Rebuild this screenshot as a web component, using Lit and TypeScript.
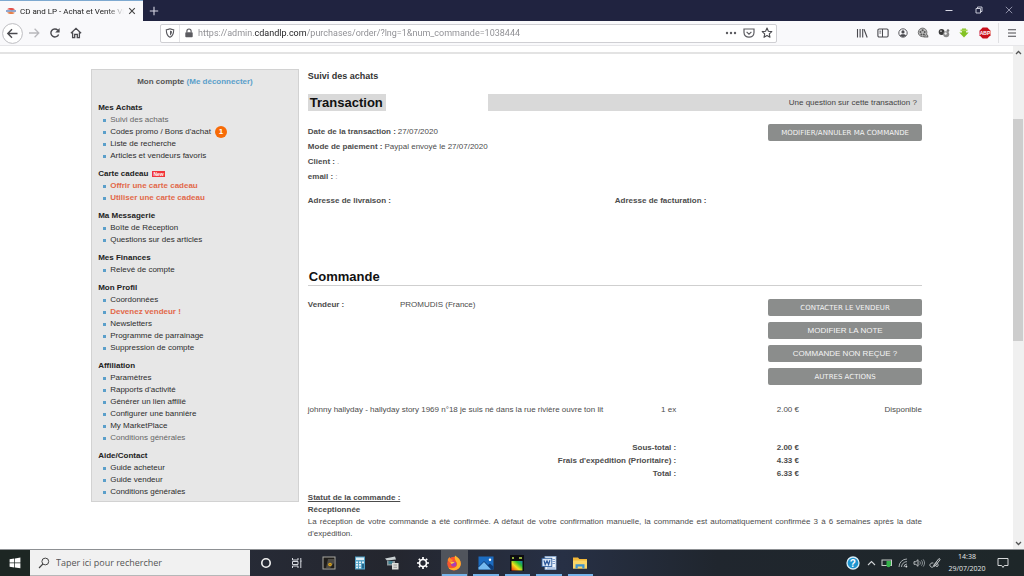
import { LitElement, html, css, svg, nothing } from "lit";
import { customElement } from "lit/decorators.js";
import { classMap } from "lit/directives/class-map.js";

const icon = (w: number, h: number, body: unknown) => html`
  <svg width=${w} height=${h} viewBox="0 0 ${w} ${h}" aria-hidden="true">${body}</svg>
`;

const ICONS = {
  favicon: icon(10, 8, svg`
    <path d="M1 2.2C3 .4 7 .6 9 2.4L6 3.2z" fill="#e2504a"/>
    <path d="M0 4h10" stroke="#4c6fae" stroke-width="1.2"/>
    <path d="M1 5.4l4-.6 4 1C7 7.6 3 7.4 1 5.4z" fill="#e8804a"/>`),
  close: icon(8, 8, svg`<path d="M1.2 1.2l5.6 5.6M6.8 1.2L1.2 6.8" stroke="#444" stroke-width="1.1"/>`),
  plus: icon(10, 10, svg`<path d="M5 .8v8.4M.8 5h8.4" stroke="#d7d8e4" stroke-width="1.1"/>`),
  min: icon(8, 8, svg`<path d="M.5 4.5h7" stroke="#d7d8e4" stroke-width="1"/>`),
  restore: icon(8, 8, svg`<path d="M1 2.5h4.5V7H1zM2.5 2.5V1H7v4.5H5.5" fill="none" stroke="#d7d8e4" stroke-width=".9"/>`),
  winClose: icon(8, 8, svg`<path d="M.8.8l6.4 6.4M7.2.8L.8 7.2" stroke="#a9abc0" stroke-width=".8"/>`),
  back: icon(21, 21, svg`
    <circle cx="10.5" cy="10.5" r="9.9" fill="#fff" stroke="#bcbcc0" stroke-width="1"/>
    <path d="M15.5 10.5H6M10 6.2L5.8 10.5l4.2 4.3" fill="none" stroke="#4a4a4f" stroke-width="1.4"/>`),
  forward: icon(12, 12, svg`<path d="M1 6h9.3M6.6 1.8L10.8 6l-4.2 4.2" fill="none" stroke="#b8b8bc" stroke-width="1.3"/>`),
  reload: icon(12, 12, svg`
    <path d="M9.6 7.4A4 4 0 1 1 8.8 3.2" fill="none" stroke="#4a4a4f" stroke-width="1.4"/>
    <path d="M10.6 1v4.4H6.2z" fill="#4a4a4f"/>`),
  home: icon(12, 12, svg`
    <path d="M.9 6.3L6 1.3l5.1 5M2.6 5.6v5h2.1V7.4h2.6v3.2h2.1v-5" fill="none" stroke="#4a4a4f" stroke-width="1.3"/>`),
  shield: icon(10, 10, svg`
    <path d="M5 .8c1.2.7 2.4.9 3.7.9 0 3.6-.6 6.2-3.7 7.6C1.9 7.900 1.300 5.300 1.300 1.700 2.600 1.700 3.800 1.500 5 .8z" fill="none" stroke="#5c5c61" stroke-width="1.100"/>
    <path d="M5 2.600v5c1.500-1 1.900-2.300 2-4.400C6.300 3.100 5.600 2.900 5 2.600z" fill="#5c5c61"/>`),
  lock: icon(10, 10, svg`
    <rect x="1.300" y="4.300" width="7.400" height="5" rx=".8" fill="#5c5c61"/>
    <path d="M2.900 4.500V3.100a2.100 2.100 0 0 1 4.200 0v1.400" fill="none" stroke="#5c5c61" stroke-width="1.200"/>`),
  dots: icon(12, 4, svg`<g fill="#5c5c61"><circle cx="2" cy="2" r="1.200"/><circle cx="6" cy="2" r="1.200"/><circle cx="10" cy="2" r="1.200"/></g>`),
  pocket: icon(12, 10, svg`
    <path d="M1 1h10v3.600C11 7.500 8.700 9.200 6 9.200S1 7.500 1 4.600z" fill="none" stroke="#5c5c61" stroke-width="1.200"/>
    <path d="M3.600 3.900L6 6.100l2.400-2.200" fill="none" stroke="#5c5c61" stroke-width="1.200"/>`),
  star: icon(12, 12, svg`
    <path d="M6 1.100l1.400 3.100 3.400.4-2.500 2.300.7 3.400-3-1.700-3 1.700.7-3.400L1.200 4.600l3.400-.4z" fill="none" stroke="#4a4a4f" stroke-width="1.100" stroke-linejoin="round"/>`),
  library: icon(12, 10, svg`<path d="M1.500 1v8.500M4.100 1v8.500M6.700 1v8.500M8 1.200l3.200 8.300" stroke="#4a4a4f" stroke-width="1.100" fill="none"/>`),
  sidebar: icon(12, 10, svg`
    <rect x=".9" y="1" width="10.200" height="8" rx="1.200" fill="none" stroke="#4a4a4f" stroke-width="1.100"/>
    <path d="M5.500 1v8" stroke="#4a4a4f"/><path d="M2.300 3.200h1.900M2.300 5h1.900" stroke="#4a4a4f" stroke-width=".8"/>`),
  account: icon(10, 10, svg`
    <circle cx="5" cy="5" r="4.200" fill="none" stroke="#5c5c61"/>
    <circle cx="5" cy="3.900" r="1.600" fill="#4a4a4f"/><path d="M2 7.600c.6-1.900 5.400-1.900 6 0C6.500 9.300 3.500 9.300 2 7.600z" fill="#4a4a4f"/>`),
  reel: icon(12, 12, svg`
    <circle cx="5.600" cy="5.400" r="4.300" fill="#bdbdbd" stroke="#6c6c6c" stroke-width=".9"/>
    <g fill="#555"><circle cx="5.600" cy="3.200" r="1"/><circle cx="3.500" cy="5" r="1"/><circle cx="7.700" cy="5" r="1"/><circle cx="4.400" cy="7.400" r="1"/><circle cx="6.900" cy="7.400" r="1"/></g>
    <path d="M6.500 9.800h4.700M9.500 7.300l1.600 2.400" stroke="#6c6c6c" stroke-width="1.200"/>`),
  balls: icon(12, 10, svg`
    <circle cx="3.600" cy="4" r="2.900" fill="#3a3a3a"/><circle cx="8.200" cy="6.300" r="3" fill="#8b8b8b"/>
    <circle cx="10" cy="2.600" r="1.300" fill="#777"/><circle cx="7.600" cy="5.500" r="1.200" fill="#f1f1f1"/><circle cx="3" cy="3.200" r=".9" fill="#bbb"/>`),
  download: icon(10, 10, svg`
    <path d="M3 .5h4v4h2.700L5 9.500.3 4.500H3z" fill="#84c225"/><path d="M1.500 1.500h7v1.700h-7z" fill="#a5d552"/>`),
  adblock: html`<svg width="12" height="12" viewBox="0 0 12 12" aria-label="ABP">
    <path d="M3.700.5h4.600l3.200 3.200v4.600l-3.200 3.200H3.700L.5 8.300V3.700z" fill="#c9101c"/>
    <text x="6" y="7.700" text-anchor="middle" font-family="Liberation Sans" font-weight="700" font-size="5" fill="#fff">ABP</text></svg>`,
  menu: icon(10, 10, svg`<path d="M1 1.700h8M1 5h8M1 8.300h8" stroke="#4a4a4f" stroke-width="1.100"/>`),
  up: icon(7, 5, svg`<path d="M1 4l2.500-2.500L6 4" fill="none" stroke="#555" stroke-width="1.300"/>`),
  down: icon(7, 5, svg`<path d="M1 1l2.500 2.500L6 1" fill="none" stroke="#555" stroke-width="1.300"/>`),
  windows: icon(12, 12, svg`<path d="M.6 2.200L5.300 1.500v4.100H.6zM6 1.400L11.400.6v5H6zM.6 6.300h4.700v4.200L.6 9.800zM6 6.300h5.400v5L6 10.600z" fill="#fff"/>`),
  search: icon(12, 12, svg`<circle cx="7.300" cy="4.500" r="3.400" fill="none" stroke="#444" stroke-width="1"/><path d="M4.900 7L1 11" stroke="#444" stroke-width="1.100"/>`),
  cortana: icon(12, 12, svg`<circle cx="6" cy="6" r="4.200" fill="none" stroke="#f2f2f2" stroke-width="1.600"/>`),
  taskview: icon(12, 12, svg`
    <path d="M1.500 1v2h5.500V1M1.500 11V9h5.500v2M1.500 4.500H7v3H1.500zM9.800 1v2M9.800 5v6" fill="none" stroke="#d5d8de" stroke-width="1"/><rect x="9" y="3.300" width="1.700" height="1.500" fill="#d5d8de"/>`),
  safe: icon(14, 14, svg`
    <rect x=".5" y=".5" width="13" height="13" fill="#aaa8a2"/><rect x="1.500" y="1.500" width="11" height="11" fill="#201e1b"/>
    <path d="M4 12l2-9h6v4l-4 5z" fill="#4c4a45"/><circle cx="8" cy="8.500" r="1.800" fill="#e0a91c"/><circle cx="8" cy="8.500" r=".7" fill="#7d5b10"/>`),
  calc: icon(12, 14, svg`
    <rect x="1" y=".5" width="10" height="13" fill="#4f9fc4"/><rect x="2" y="1.500" width="8" height="2.600" fill="#dceef6"/>
    <g fill="#e6f3f9"><rect x="2" y="5.500" width="2" height="1.700"/><rect x="5" y="5.500" width="2" height="1.700"/><rect x="8" y="5.500" width="2" height="1.700"/><rect x="2" y="8" width="2" height="1.700"/><rect x="5" y="8" width="2" height="1.700"/><rect x="2" y="10.600" width="2" height="1.700"/><rect x="5" y="10.600" width="2" height="1.700"/></g><rect x="8" y="8" width="2" height="4.300" fill="#27688c"/>`),
  scanner: icon(16, 14, svg`
    <path d="M1 2.500l10-2 1 3-9 1z" fill="#c9d0d2"/><rect x="3" y="5" width="8" height="4.500" fill="#8c989d"/><path d="M4.500 5h4v3h-4z" fill="#3f7f90"/>
    <rect x="8" y="7" width="6.500" height="6.500" fill="#dededa"/><path d="M9.500 9h3.500M9.500 11.300h3.500" stroke="#888" stroke-width=".8"/>`),
  gear: icon(14, 14, svg`
    <circle cx="7" cy="7" r="3.500" fill="none" stroke="#fff" stroke-width="1.700"/>
    <path d="M7 1v2M7 11v2M1 7h2M11 7h2M2.800 2.800l1.400 1.400M9.800 9.800l1.400 1.400M11.200 2.800L9.800 4.200M4.200 9.800l-1.400 1.400" stroke="#fff" stroke-width="1.700"/>`),
  firefox: icon(16, 16, svg`
    <circle cx="8" cy="8.600" r="6.800" fill="#f9562e"/>
    <path d="M9 .6c3.600 2 5.800 4.800 5.800 8.200 0 3.700-3.200 6.400-6.800 6.400-2.500 0-4.500-1-5.700-2.800 3 1.500 7.700.8 8.700-2.400C11.900 7 7.600 5.500 9 .6z" fill="#ffb52a"/>
    <path d="M1.600 5.200C2 3.500 3 2.600 3.600 2c.2 1.500 1.600 2.500 3.300 2.700L4.500 8.200z" fill="#ff8a2c"/>
    <circle cx="7.700" cy="9" r="2.600" fill="#a83fb8"/><path d="M4.500 7.500c1.500-1.300 3.400-1 4.200.2-1.600 0-2 1.100-3.300 1.200z" fill="#ffce3a"/>`),
  photos: icon(16, 14, svg`
    <rect x=".5" y=".5" width="15" height="13" fill="#1c6cc1"/><path d="M.5 10.500L6 5l4 4 1.800-1.500 3.700 3v3H.5z" fill="#0d3c79"/><path d="M.5 13.500v-2L6 6l7 7.500z" fill="#75baf0"/><circle cx="12" cy="3.700" r="1.200" fill="#fff"/>`),
  colors: html`<svg width="14" height="16" viewBox="0 0 14 16" aria-hidden="true">
    <defs><linearGradient id="spectrum" x1="0" y1="1" x2="1" y2="0"><stop offset="0" stop-color="#f22f13"/><stop offset=".4" stop-color="#f4e21c"/><stop offset=".7" stop-color="#2dbd32"/><stop offset="1" stop-color="#1578b8"/></linearGradient></defs>
    <rect width="14" height="16" fill="#0d0d10"/><rect x="1.500" y="6" width="11" height="9.500" fill="url(#spectrum)"/><path d="M2 2h2v2H2zM5 3h3M9 2h3v2H9z" fill="#8fae3c"/></svg>`,
  word: icon(16, 14, svg`
    <rect x="4" y=".5" width="11" height="13" fill="#eef4fb" stroke="#8fb0d8" stroke-width=".8"/><path d="M11.500 3.500h2.500M11.500 5.500h2.500M11.500 7.500h2.500M6 12h8" stroke="#6f93c6" stroke-width=".9"/>
    <rect x="1" y="2.300" width="9.800" height="8.200" fill="#d8e5f5" stroke="#31609f" stroke-width=".9"/><path d="M3 4.300l1.200 4.200L6 4.900l1.600 3.600 1.300-4.200" fill="none" stroke="#2a5699" stroke-width="1.200"/>`),
  folder: icon(16, 14, svg`
    <path d="M1 1.500h5l1.300 1.500H15v9.500H1z" fill="#f2b83a"/><path d="M1 4.500h14v8H1z" fill="#fbd768"/><path d="M3.500 12.500V8.200h9v4.300h-2.200v-2H5.700v2z" fill="#3e93cf"/>`),
  help: html`<svg width="14" height="14" viewBox="0 0 14 14" aria-label="Aide">
    <circle cx="7" cy="7" r="6" fill="#1f95cf" stroke="#d7edf8" stroke-width="1.300"/>
    <text x="6.800" y="10.500" text-anchor="middle" font-family="Liberation Sans" font-weight="700" font-size="10" fill="#fff">?</text></svg>`,
  chevron: icon(9, 6, svg`<path d="M1 5l3.500-3.500L8 5" fill="none" stroke="#d0d3d5" stroke-width="1.100"/>`),
  battery: icon(12, 10, svg`
    <rect x="1" y="2" width="9.500" height="5.500" fill="none" stroke="#c8cdca"/><path d="M5.500 3H10v4H5.500z" fill="#35b34a"/><circle cx="7.500" cy="7.200" r="2" fill="#35b34a"/>`),
  wifi: icon(10, 10, svg`<path d="M1 9A8 8 0 0 1 9 1M3.500 9A5.500 5.500 0 0 1 9 3.600M6 9a3 3 0 0 1 3-3" fill="none" stroke="#a5abae" stroke-width="1"/><circle cx="8.300" cy="8.500" r="1" fill="#dfe2e4"/>`),
  sound: icon(12, 10, svg`<path d="M1 3.700h1.800L5 1.700v6.600L2.800 6.300H1z" fill="none" stroke="#c8ccce" stroke-width=".9"/><path d="M6.700 3.300c.8 1 .8 2.400 0 3.400M8.400 2.300c1.400 1.600 1.400 3.800 0 5.400M10.200 1.400c1.800 2.200 1.800 5 0 7.200" fill="none" stroke="#a5abae" stroke-width=".8"/>`),
  pen: icon(12, 12, svg`<path d="M4.500 8.500L10 1.500l1.200 1L6 9.300zM4.300 6C1.500 5.500 0 8 1.500 9.500S5 10 6 7.500s2.500-2 3 0-1 2.500-2 1.500" fill="none" stroke="#c8ccce" stroke-width="1"/>`),
  notice: icon(12, 12, svg`<path d="M1 1.500h10v7H7.300L6 10.500l-1.300-2H1z" fill="none" stroke="#d6d9da" stroke-width="1"/>`),
};

interface Entry { label: string; tone?: "hot" | "soft"; count?: number }
interface Group { title: string; isNew?: boolean; entries: Entry[] }

const GROUPS: Group[] = [
  { title: "Mes Achats", entries: [
    { label: "Suivi des achats", tone: "soft" },
    { label: "Codes promo / Bons d'achat", count: 1 },
    { label: "Liste de recherche" },
    { label: "Articles et vendeurs favoris" } ] },
  { title: "Carte cadeau", isNew: true, entries: [
    { label: "Offrir une carte cadeau", tone: "hot" },
    { label: "Utiliser une carte cadeau", tone: "hot" } ] },
  { title: "Ma Messagerie", entries: [{ label: "Boîte de Réception" }, { label: "Questions sur des articles" }] },
  { title: "Mes Finances", entries: [{ label: "Relevé de compte" }] },
  { title: "Mon Profil", entries: [
    { label: "Coordonnées" }, { label: "Devenez vendeur !", tone: "hot" }, { label: "Newsletters" },
    { label: "Programme de parrainage" }, { label: "Suppression de compte" } ] },
  { title: "Affiliation", entries: [
    { label: "Paramètres" }, { label: "Rapports d'activité" }, { label: "Générer un lien affilié" },
    { label: "Configurer une bannière" }, { label: "My MarketPlace" }, { label: "Conditions générales", tone: "soft" } ] },
  { title: "Aide/Contact", entries: [{ label: "Guide acheteur" }, { label: "Guide vendeur" }, { label: "Conditions générales" }] },
];

const resets = css`
  * { box-sizing: border-box; }
  button, input { font: inherit; color: inherit; border: 0; padding: 0; margin: 0; background: none; }
  button { display: flex; align-items: center; justify-content: center; }
  svg { display: block; flex: none; }
  a { color: inherit; text-decoration: none; }
  ul, dl, dd, h1, h2, h3, p { margin: 0; padding: 0; }
  ul { list-style: none; }
`;

@customElement("browser-bar")
class BrowserBar extends LitElement {
  static styles = [resets, css`
    :host { display: block; font-family: Roboto, "Open Sans", sans-serif; }
    .titlebar { display: flex; height: 21px; background: #202340; }
    .tab { display: flex; align-items: center; gap: 4px; width: 143px; padding: 0 7px 0 6px; background: #f9f9fb; border-top: 1px solid #7ea9d0; font-size: 8px; color: #222; }
    .tab-title { flex: 1; min-width: 0; white-space: nowrap; -webkit-mask-image: linear-gradient(90deg, #000 84%, transparent); mask-image: linear-gradient(90deg, #000 84%, transparent); }
    .new { width: 22px; }
    .window { display: flex; width: 90px; margin-left: auto; padding-bottom: 2px; }
    .window button { flex: 1; }
    .toolbar { display: flex; align-items: center; height: 25px; padding-left: 2px; background: #f9f9fb; border-bottom: 1px solid #e6e6e9; }
    .nav { display: flex; }
    .nav button { width: 21px; height: 21px; }
    .address { display: flex; flex: 1; align-items: center; height: 19px; margin: 0 75px 0 74px; background: #fff; border: 1px solid #cfcfd3; border-radius: 2px; }
    .address button { width: 18px; height: 17px; }
    .address .site { border-left: 1px solid #e3e3e6; }
    .url { flex: 1; min-width: 0; height: 17px; padding-left: 1px; font-size: 9px; color: transparent; -webkit-text-fill-color: transparent; background: linear-gradient(90deg, #8a8a8f 57px, #1c1c1f 57px 109px, #8a8a8f 109px); -webkit-background-clip: text; background-clip: text; }
    .tools { display: flex; width: 143px; margin-right: 3px; }
    .tools button { flex: 1; height: 20px; }
    .menu { width: 26px; height: 20px; border-left: 1px solid #e0e0e3; }
  `];

  render() {
    const tools: [string, unknown][] = [
      ["Bibliothèque", ICONS.library], ["Panneau latéral", ICONS.sidebar], ["Compte", ICONS.account],
      ["Vidéo", ICONS.reel], ["Extension", ICONS.balls], ["Télécharger", ICONS.download], ["Adblock Plus", ICONS.adblock],
    ];
    return html`
      <div class="titlebar">
        <div class="tab">${ICONS.favicon}<span class="tab-title">CD and LP - Achat et Vente Vin</span><button aria-label="Fermer l'onglet">${ICONS.close}</button></div>
        <button class="new" aria-label="Nouvel onglet">${ICONS.plus}</button>
        <div class="window">
          <button aria-label="Réduire">${ICONS.min}</button>
          <button aria-label="Restaurer">${ICONS.restore}</button>
          <button aria-label="Fermer">${ICONS.winClose}</button>
        </div>
      </div>
      <div class="toolbar">
        <div class="nav">
          <button aria-label="Précédent">${ICONS.back}</button>
          <button aria-label="Suivant">${ICONS.forward}</button>
          <button aria-label="Actualiser">${ICONS.reload}</button>
          <button aria-label="Accueil">${ICONS.home}</button>
        </div>
        <div class="address">
          <button aria-label="Protection">${ICONS.shield}</button>
          <button class="site" aria-label="Site sécurisé">${ICONS.lock}</button>
          <input class="url" aria-label="Adresse" .value=${"https://admin.cdandlp.com/purchases/order/?lng=1&num_commande=1038444"} />
          <button aria-label="Actions">${ICONS.dots}</button>
          <button aria-label="Pocket">${ICONS.pocket}</button>
          <button aria-label="Marque-page">${ICONS.star}</button>
        </div>
        <div class="tools">${tools.map(([name, glyph]) => html`<button aria-label=${name}>${glyph}</button>`)}</div>
        <button class="menu" aria-label="Menu">${ICONS.menu}</button>
      </div>
    `;
  }
}

@customElement("account-menu")
class AccountMenu extends LitElement {
  static styles = [resets, css`
    :host { display: block; padding: 6px 6px 3px; background: #e7e7e7; border: 1px solid #d2d2d2; font-size: 8px; line-height: 12px; color: #2d2d2d; }
    .account { text-align: center; font-weight: 700; color: #555; }
    .logout { color: #5b9fca; }
    .groups { display: flex; flex-direction: column; gap: 6px; margin-top: 14px; }
    .title { display: flex; align-items: center; gap: 4px; font-size: 8px; font-weight: 700; line-height: 12px; color: #222; }
    .new { padding: 0 1px; background: #f0353c; color: #fff; font-size: 5px; line-height: 6px; }
    .entry { display: flex; align-items: center; padding-left: 5px; height: 12px; }
    .entry::before { content: ""; width: 3px; height: 3px; margin-right: 4px; background: #5b9fca; }
    .hot { font-weight: 700; color: #e2694a; }
    .soft { color: #666; }
    .count { width: 12px; height: 12px; margin-left: 4px; border-radius: 50%; background: #f76b07; color: #fff; font-weight: 700; text-align: center; }
  `];

  render() {
    return html`
      <p class="account">Mon compte <a class="logout" href="#">(Me déconnecter)</a></p>
      <nav class="groups">
        ${GROUPS.map((group) => html`
          <section>
            <h3 class="title">${group.title}${group.isNew ? html`<span class="new">New</span>` : nothing}</h3>
            <ul>
              ${group.entries.map((entry) => html`
                <li class="entry">
                  <a href="#" class=${classMap({ hot: entry.tone === "hot", soft: entry.tone === "soft" })}>${entry.label}</a>
                  ${entry.count ? html`<span class="count">${entry.count}</span>` : nothing}
                </li>`)}
            </ul>
          </section>`)}
      </nav>
    `;
  }
}

@customElement("order-details")
class OrderDetails extends LitElement {
  static styles = [resets, css`
    :host { display: block; padding-top: 1px; font-size: 8px; line-height: 12px; color: #4c4c4c; }
    .crumb { font-size: 9px; line-height: 12px; color: #333; }
    .heading { font-size: 13px; line-height: 17px; color: #111; }
    .banner { display: flex; margin-top: 12px; background: #d9d9d9; }
    .banner .heading { width: 78px; padding-left: 2px; }
    .blank { width: 102px; background: #fff; }
    .question { flex: 1; padding-right: 5px; text-align: right; line-height: 17px; color: #444; }
    .split { display: grid; grid-template-columns: 1fr 25%; margin-top: 13px; }
    .facts { line-height: 15px; }
    .facts div { display: flex; gap: 2px; }
    dt { font-weight: 700; }
    .erased { color: #999; }
    .actions { display: flex; flex-direction: column; gap: 6px; }
    .action { height: 17px; border-radius: 2px; background: #8b8d8c; color: #f4f4f4; font-size: 8px; }
    .wide { font-family: "DejaVu Sans", sans-serif; font-size: 7px; }
    .addresses { display: grid; grid-template-columns: 1fr 1fr; min-height: 73px; margin-top: 11px; font-weight: 700; }
    .order { padding: 0 1px; border-bottom: 1px solid #cfcfcf; }
    .seller { display: flex; }
    .seller dt { width: 20%; }
    table { width: 100%; margin-top: 19px; border-collapse: collapse; table-layout: fixed; }
    td, th { padding: 0; text-align: right; line-height: 12px; }
    .article { width: 51%; text-align: left; white-space: nowrap; }
    .qty { width: 9%; }
    .price { width: 20%; }
    .totals { font-weight: 700; }
    .totals th, .totals td { line-height: 13px; }
    .totals tr:first-child > * { padding-top: 25px; }
    .status { margin-top: 12px; text-align: justify; }
    .underlined { text-decoration: underline; }
  `];

  render() {
    return html`
      <h3 class="crumb">Suivi des achats</h3>
      <div class="banner">
        <h1 class="heading">Transaction</h1><span class="blank"></span>
        <a class="question" href="#">Une question sur cette transaction ?</a>
      </div>
      <div class="split">
        <dl class="facts">
          <div><dt>Date de la transaction :</dt><dd>27/07/2020</dd></div>
          <div><dt>Mode de paiement :</dt><dd>Paypal envoyé le 27/07/2020</dd></div>
          <div><dt>Client :</dt><dd class="erased">.</dd></div>
          <div><dt>email :</dt><dd class="erased">:</dd></div>
        </dl>
        <div class="actions"><button class="action wide">MODIFIER/ANNULER MA COMMANDE</button></div>
      </div>
      <div class="addresses"><span>Adresse de livraison :</span><span>Adresse de facturation :</span></div>
      <h2 class="heading order">Commande</h2>
      <div class="split">
        <dl class="seller"><dt>Vendeur :</dt><dd>PROMUDIS (France)</dd></dl>
        <div class="actions">
          <button class="action wide">CONTACTER LE VENDEUR</button>
          <button class="action">MODIFIER LA NOTE</button>
          <button class="action">COMMANDE NON REÇUE ?</button>
          <button class="action wide">AUTRES ACTIONS</button>
        </div>
      </div>
      <table>
        <tbody>
          <tr>
            <td class="article">johnny hallyday - hallyday story 1969 n°18 je suis né dans la rue rivière ouvre ton lit</td>
            <td class="qty">1 ex</td><td class="price">2.00 €</td><td>Disponible</td>
          </tr>
        </tbody>
        <tbody class="totals">
          ${[["Sous-total :", "2.00 €"], ["Frais d'expédition (Prioritaire) :", "4.33 €"], ["Total :", "6.33 €"]].map(([label, sum]) => html`
            <tr><th scope="row" colspan="2">${label}</th><td>${sum}</td><td></td></tr>`)}
        </tbody>
      </table>
      <div class="status">
        <p><b class="underlined">Statut de la commande :</b></p>
        <p><b>Réceptionnée</b></p>
        <p>La réception de votre commande a été confirmée. A défaut de votre confirmation manuelle, la commande est automatiquement confirmée 3 à 6 semaines après la date d'expédition.</p>
      </div>
    `;
  }
}

@customElement("task-bar")
class TaskBar extends LitElement {
  static styles = [resets, css`
    :host { display: flex; height: 27px; border-top: 1px solid #8d9093; background: linear-gradient(90deg, #2b3244 0, #24262e 38%, #273045 55%, #20262e 70%, #1e2729 100%); font-family: "Open Sans", "Noto Sans", sans-serif; color: #e6e8e9; }
    .start { width: 30px; background: #1d2623; }
    .search { display: flex; align-items: center; gap: 6px; width: 220px; padding-left: 8px; background: #f1f1f1; color: #444; border-bottom: 1px solid #b5b7b8; }
    .search input { flex: 1; min-width: 0; font-size: 9px; }
    .search input::placeholder { color: #555; opacity: 1; }
    .apps { display: flex; width: 346px; }
    .apps button { flex: 1; position: relative; }
    .active { background: linear-gradient(90deg, transparent 2px, #50545c 2px 29px, transparent 29px); }
    .open::after { content: ""; position: absolute; left: 3px; right: 3px; bottom: 0; height: 2px; background: #76b4ea; }
    .tray { display: flex; align-items: center; margin-left: auto; }
    .tray button { width: 16px; height: 26px; }
    .tray .assist { width: 20px; }
    .clock { width: 48px; font-size: 7px; line-height: 12px; text-align: center; }
    .tray .notice { width: 24px; margin-right: 9px; }
  `];

  render() {
    const apps: [string, unknown, string][] = [
      ["Cortana", ICONS.cortana, ""], ["Affichage des tâches", ICONS.taskview, ""], ["Coffre", ICONS.safe, ""],
      ["Calculatrice", ICONS.calc, ""], ["Scanner", ICONS.scanner, ""], ["Paramètres", ICONS.gear, ""],
      ["Firefox", ICONS.firefox, "open active"], ["Photos", ICONS.photos, "open"], ["Couleurs", ICONS.colors, "open"],
      ["Word", ICONS.word, "open"], ["Explorateur", ICONS.folder, "open"],
    ];
    return html`
      <button class="start" aria-label="Démarrer">${ICONS.windows}</button>
      <label class="search">${ICONS.search}<input type="text" aria-label="Rechercher" placeholder="Taper ici pour rechercher" /></label>
      <div class="apps">${apps.map(([name, glyph, state]) => html`<button class=${state} aria-label=${name}>${glyph}</button>`)}</div>
      <div class="tray">
        <button class="assist" aria-label="Aide">${ICONS.help}</button>
        <button aria-label="Icônes cachées">${ICONS.chevron}</button>
        <button aria-label="Batterie">${ICONS.battery}</button>
        <button aria-label="Réseau">${ICONS.wifi}</button>
        <button aria-label="Volume">${ICONS.sound}</button>
        <button aria-label="Stylet">${ICONS.pen}</button>
        <div class="clock">14:38<br />29/07/2020</div>
        <button class="notice" aria-label="Notifications">${ICONS.notice}</button>
      </div>
    `;
  }
}

@customElement("app-root")
class AppRoot extends LitElement {
  static styles = [resets, css`
    :host { display: flex; flex-direction: column; height: 100vh; background: #fff; font-family: "Liberation Sans", Arial, sans-serif; }
    .viewport { display: flex; flex: 1; min-height: 0; }
    .page { flex: 1; overflow: hidden; padding-top: 6px; }
    .rule { height: 2px; background: #e3e3e3; }
    .content { display: grid; grid-template-columns: 25% 1fr; gap: 9px; align-items: start; width: 82%; max-width: 960px; margin: 15px auto 0; }
    .scrollbar { display: flex; flex-direction: column; width: 11px; background: #f0f0f0; }
    .scrollbar button { height: 12px; }
    .track { flex: 1; padding: 61px 1px 0 0; }
    .thumb { height: 53%; background: #cdcdcd; }
  `];

  render() {
    return html`
      <browser-bar></browser-bar>
      <div class="viewport">
        <main class="page">
          <div class="rule"></div>
          <div class="content"><account-menu></account-menu><order-details></order-details></div>
        </main>
        <div class="scrollbar">
          <button aria-label="Défiler vers le haut">${ICONS.up}</button>
          <div class="track"><div class="thumb"></div></div>
          <button aria-label="Défiler vers le bas">${ICONS.down}</button>
        </div>
      </div>
      <task-bar></task-bar>
    `;
  }
}
